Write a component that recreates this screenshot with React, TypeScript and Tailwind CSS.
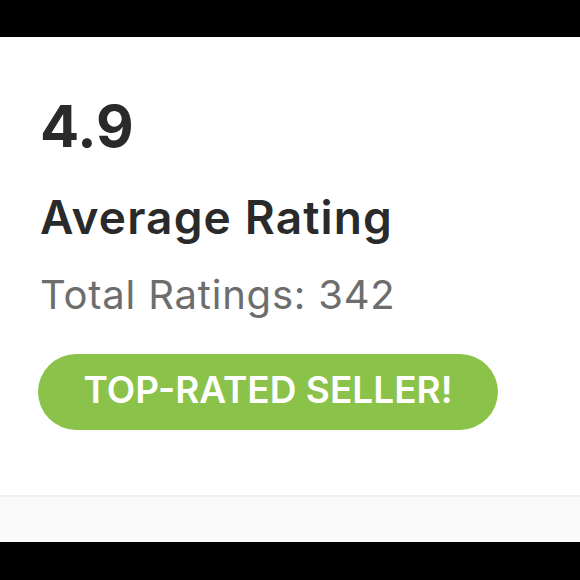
export default function App() {
  return (
    <div className="w-[580px] h-[580px] flex flex-col bg-black" style={{ fontFamily: 'Inter, "Noto Sans", sans-serif' }}>
      <div className="h-[37px] bg-black shrink-0" />
      <div className="h-[458px] bg-white pl-[40px] pt-[60px] flex flex-col items-start shrink-0">
        <div className="text-[58px] leading-none font-bold text-[#2a2a2a]">4.9</div>
        <div className="mt-[39px] text-[46px] leading-none font-semibold tracking-[0.025em] text-[#2a2a2a]">
          Average Rating
        </div>
        <div className="mt-[35px] text-[40px] leading-none tracking-[0.02em] text-[#6d6d6d]">Total Ratings: 342</div>
        <div className="mt-[39px] -ml-[2px] w-[460px] h-[76px] pb-[6px] rounded-full bg-[#8bc34a] flex items-center justify-center">
          <span className="text-[37px] leading-none font-semibold text-white">TOP-RATED SELLER!</span>
        </div>
      </div>
      <div className="h-[47px] bg-[#fafafa] border-t-2 border-[#f1f1f1] shrink-0" />
      <div className="flex-1 bg-black" />
    </div>
  )
}
